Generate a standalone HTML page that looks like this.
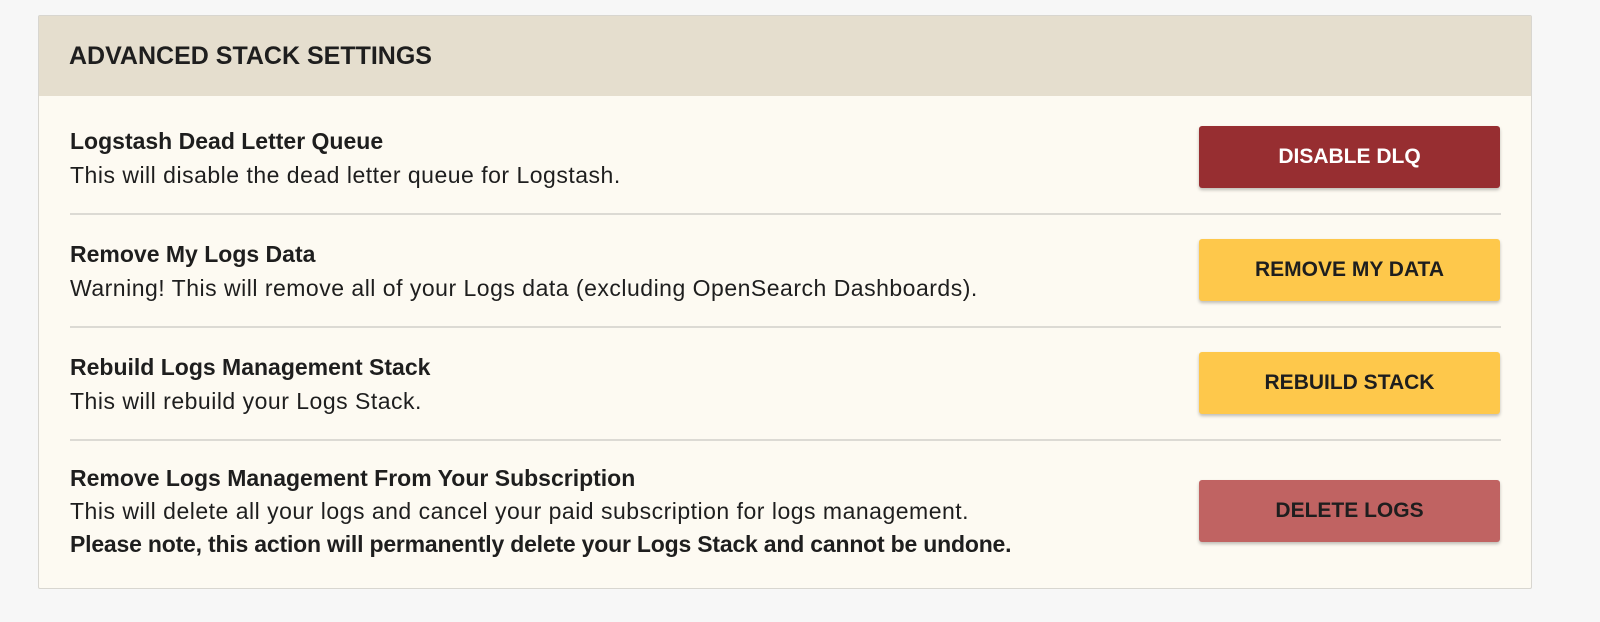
<!DOCTYPE html><html><head><style>
body{margin:0;background:#f7f7f7;font-family:"Liberation Sans",sans-serif;color:#1e1e1e;width:1600px;height:622px;position:relative;overflow:hidden}
.p{position:absolute;left:38px;top:15px;width:1492px;height:572px;border:1px solid #d8d6d0;background:#fdfaf2;border-radius:2px}
.h{height:80px;background:#e5dece;font-weight:bold;font-size:25px;line-height:80px;padding-left:30px}
.t{position:absolute;left:31px;font-size:23px;line-height:34px;letter-spacing:0.5px;white-space:nowrap}
.b{font-weight:bold;letter-spacing:0}
.btn{position:absolute;left:1160px;width:301px;height:62px;border-radius:3px;font-weight:bold;font-size:21px;text-align:center;line-height:62px;box-shadow:0 2px 3px rgba(0,0,0,.25)}
.d{position:absolute;left:31px;width:1431px;height:2px;background:#dcdad4}
</style></head><body><div class="p">
<div class="h">ADVANCED STACK SETTINGS</div>
<div class="t" style="top:108px"><div class="b">Logstash Dead Letter Queue</div>This will disable the dead letter queue for Logstash.</div>
<div class="btn" style="top:110px;background:#972e31;color:#fff">DISABLE DLQ</div>
<div class="d" style="top:197px"></div>
<div class="t" style="top:221px"><div class="b">Remove My Logs Data</div>Warning! This will remove all of your Logs data (excluding OpenSearch Dashboards).</div>
<div class="btn" style="top:223px;background:#fec84b;color:#1e1e1e">REMOVE MY DATA</div>
<div class="d" style="top:310px"></div>
<div class="t" style="top:334px"><div class="b">Rebuild Logs Management Stack</div>This will rebuild your Logs Stack.</div>
<div class="btn" style="top:336px;background:#fec84b;color:#1e1e1e">REBUILD STACK</div>
<div class="d" style="top:423px"></div>
<div class="t" style="top:446px;line-height:33px"><div class="b">Remove Logs Management From Your Subscription</div>This will delete all your logs and cancel your paid subscription for logs management.<div class="b" style="letter-spacing:-0.2px">Please note, this action will permanently delete your Logs Stack and cannot be undone.</div></div>
<div class="btn" style="top:464px;background:#c06362;color:#1e1e1e">DELETE LOGS</div>
</div></body></html>
